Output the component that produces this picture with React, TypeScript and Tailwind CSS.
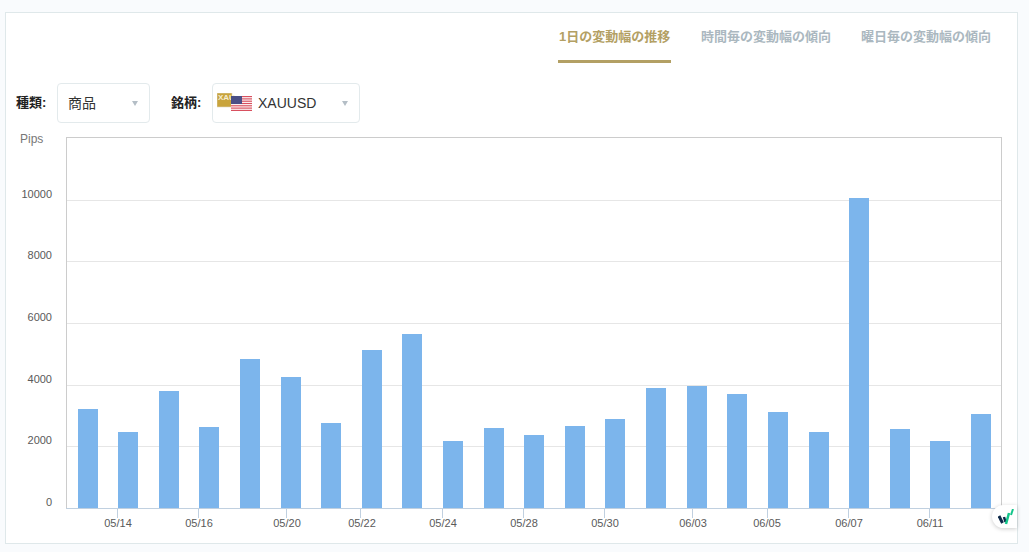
const font = "[font-family:'Liberation_Sans','Noto_Sans_CJK_JP',sans-serif]"

const tabs = ["1日の変動幅の推移", "時間毎の変動幅の傾向", "曜日毎の変動幅の傾向"]

// left edge and top of each bar, in chart pixels
const bars = [
  [78, 409], [118, 432], [159, 391], [199, 427], [240, 359], [281, 377], [321, 423], [362, 350],
  [402, 334], [443, 441], [484, 428], [524, 435], [565, 426], [605, 419], [646, 388], [687, 386],
  [727, 394], [768, 412], [809, 432], [849, 198], [890, 429], [930, 441], [971, 414],
]

const yLabels = [
  ["10000", 200],
  ["8000", 261],
  ["6000", 323],
  ["4000", 385],
  ["2000", 446],
  ["0", 508],
] as const

// label centre and tick position
const xLabels = [
  ["05/14", 118, 117],
  ["05/16", 199, 198],
  ["05/20", 287, 286],
  ["05/22", 362, 360],
  ["05/24", 443, 442],
  ["05/28", 524, 523],
  ["05/30", 605, 604],
  ["06/03", 693, 692],
  ["06/05", 767, 767],
  ["06/07", 849, 848],
  ["06/11", 930, 929],
] as const

function Caret() {
  return <span className="ml-auto h-0 w-0 border-x-[3.5px] border-t-[5px] border-x-transparent border-t-[#b4bec6]" />
}

function PairIcon() {
  return (
    <svg width="36" height="20" viewBox="0 0 36 20" className="mr-[5px] shrink-0">
      <rect x="0" y="0" width="15" height="14" fill="#c9a43c" stroke="#ded8c4" strokeWidth="0.6" />
      <text x="1" y="7" fontSize="8" fontWeight="700" fill="#f5ecd2" fontFamily="Liberation Sans">XAU</text>
      <rect x="14" y="3" width="21" height="15" fill="#fff" />
      {[3, 5.3, 7.6, 9.9, 12.2, 14.5, 16.8].map((y) => (
        <rect key={y} x="14" y={y} width="21" height="1.2" fill="#d8505f" />
      ))}
      <rect x="14" y="3" width="11" height="8" fill="#4a4f86" />
    </svg>
  )
}

export default function App() {
  return (
    <div className={`h-[552px] w-[1029px] overflow-hidden bg-[#f9fbfd] pl-[5px] pt-3 ${font}`}>
      <div className="relative h-[532px] w-[1013px] border border-[#dfe8ea] bg-white">
        <div className="flex h-[50px] justify-end gap-[30px] pr-[26px]">
          {tabs.map((tab, i) => (
            <div
              key={tab}
              className={`h-[50px] pt-[14px] text-[13px] font-bold leading-[20px] ${
                i === 0 ? "w-[113px] border-b-[3px] border-[#b3a064] pl-[1px] text-[#b3a064]" : "text-[#abb8c0]"
              }`}
            >
              {tab}
            </div>
          ))}
        </div>

        <div className="mt-5 flex h-10 items-center pl-[10px]">
          <span className="w-[41px] text-[13px] font-bold text-[#222]">種類:</span>
          <div className="flex h-10 w-[93px] items-center rounded border border-[#e3eaec] pl-[10px] pr-[11px] text-[14px] text-[#333]">
            商品
            <Caret />
          </div>
          <span className="ml-[21px] w-[41px] text-[13px] font-bold text-[#222]">銘柄:</span>
          <div className="flex h-10 w-[148px] items-center rounded border border-[#e3eaec] pl-1 pr-[11px] text-[14px] text-[#333]">
            <PairIcon />
            XAUUSD
            <Caret />
          </div>
        </div>

        <svg width="1011" height="415" viewBox="6 129 1011 415" className="mt-[6px] block" fontFamily="Liberation Sans">
          <text x="20" y="143" fontSize="12" fill="#777">Pips</text>
          <rect x="66.5" y="137.5" width="935" height="371" fill="#fff" stroke="#ccc" />
          {yLabels.slice(0, -1).map(([label, y]) => (
            <line key={label} x1="67" x2="1001" y1={y + 0.5} y2={y + 0.5} stroke="#e6e6e6" />
          ))}
          {bars.map(([x, top]) => (
            <rect key={x} x={x} y={top} width="20" height={508 - top} fill="#7cb5ec" />
          ))}
          <line x1="66" x2="1001" y1="508.5" y2="508.5" stroke="#c0d0e0" />
          {xLabels.map(([label, x, tick]) => (
            <g key={label}>
              <line x1={tick + 0.5} x2={tick + 0.5} y1="508" y2="518" stroke="#c0d0e0" />
              <text x={x} y="527" fontSize="11" fill="#5a5a5a" textAnchor="middle">{label}</text>
            </g>
          ))}
          {yLabels.map(([label, y]) => (
            <text key={label} x="52" y={y - 2} fontSize="11" fill="#5a5a5a" textAnchor="end">{label}</text>
          ))}
        </svg>

        <div className="absolute bottom-[15px] right-0 flex h-[23px] w-[25px] items-center justify-center rounded-l-xl bg-white pl-[3px] shadow-[0_1px_4px_rgba(0,0,0,0.2)]">
          <svg width="16" height="16" viewBox="0 0 16 16" className="shrink-0">
            <path d="M1 7 L4.5 14" stroke="#0f2a4a" strokeWidth="3" fill="none" />
            <path d="M6 8 L7.5 13" stroke="#0f2a4a" strokeWidth="2.5" fill="none" />
            <path d="M8 15 L11 4" stroke="#12c58a" strokeWidth="2.5" fill="none" />
            <path d="M13 6 L15 0" stroke="#12c58a" strokeWidth="2" fill="none" />
          </svg>
        </div>
      </div>
    </div>
  )
}
